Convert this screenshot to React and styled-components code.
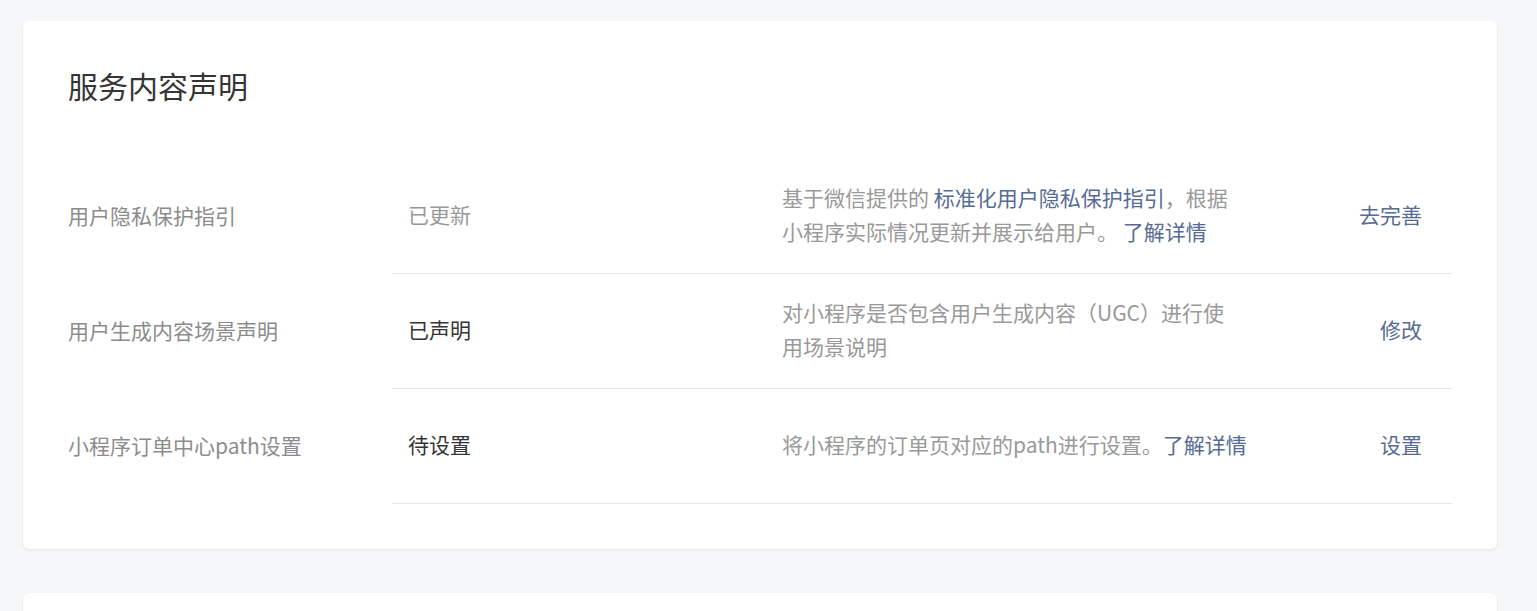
import styled, { createGlobalStyle } from 'styled-components';

const GlobalStyle = createGlobalStyle`
  html, body {
    margin: 0;
    padding: 0;
    background: #f6f7f9;
    font-family: "Noto Sans CJK SC", "Noto Sans", sans-serif;
  }
`;

const Page = styled.div`
  padding: 21px 40px 0 23px;
  display: flex;
  flex-direction: column;
  gap: 44px;
`;

const Card = styled.div`
  background: #fff;
  border-radius: 6px;
  box-shadow: 0 1px 3px rgba(0, 0, 0, 0.09);
  padding: 43px 45px 45px;
  min-height: ${(props) => props.$minHeight || 0}px;
  box-sizing: border-box;
`;

const Title = styled.h2`
  margin: 0 0 53px;
  font-size: 30px;
  line-height: 42px;
  font-weight: 400;
  color: #353535;
`;

const Row = styled.div`
  display: grid;
  grid-template-columns: 324px 1fr;
  height: 115px;
`;

const Label = styled.div`
  display: flex;
  align-items: center;
  padding-bottom: 4px;
  font-size: 21px;
  color: #8c8c8c;
`;

const Body = styled.div`
  display: grid;
  grid-template-columns: 390px 1fr auto;
  align-items: center;
  border-bottom: 1px solid #e7e7eb;
  padding: 0 30px 4px 0;
`;

const Status = styled.div`
  padding-left: 16px;
  font-size: 21px;
  color: ${(props) => (props.$muted ? '#999999' : '#353535')};
`;

const Desc = styled.div`
  font-size: 21px;
  line-height: 34px;
  color: #999999;
  white-space: nowrap;
`;

const Link = styled.a`
  color: #576b95;
  text-decoration: none;
  cursor: pointer;
`;

const Action = styled.a`
  font-size: 21px;
  color: #576b95;
  text-decoration: none;
  cursor: pointer;
`;

const rows = [
  {
    label: '用户隐私保护指引',
    status: '已更新',
    muted: true,
    desc: (
      <>
        基于微信提供的 <Link>标准化用户隐私保护指引</Link>，根据
        <br />
        小程序实际情况更新并展示给用户。 <Link>了解详情</Link>
      </>
    ),
    action: '去完善',
  },
  {
    label: '用户生成内容场景声明',
    status: '已声明',
    desc: (
      <>
        对小程序是否包含用户生成内容（UGC）进行使
        <br />
        用场景说明
      </>
    ),
    action: '修改',
  },
  {
    label: '小程序订单中心path设置',
    status: '待设置',
    desc: (
      <>
        将小程序的订单页对应的path进行设置。<Link>了解详情</Link>
      </>
    ),
    action: '设置',
  },
];

export default function App() {
  return (
    <>
      <GlobalStyle />
      <Page>
        <Card>
          <Title>服务内容声明</Title>
          {rows.map((row) => (
            <Row key={row.label}>
              <Label>{row.label}</Label>
              <Body>
                <Status $muted={row.muted}>{row.status}</Status>
                <Desc>{row.desc}</Desc>
                <Action>{row.action}</Action>
              </Body>
            </Row>
          ))}
        </Card>
        <Card $minHeight={200} />
      </Page>
    </>
  );
}
